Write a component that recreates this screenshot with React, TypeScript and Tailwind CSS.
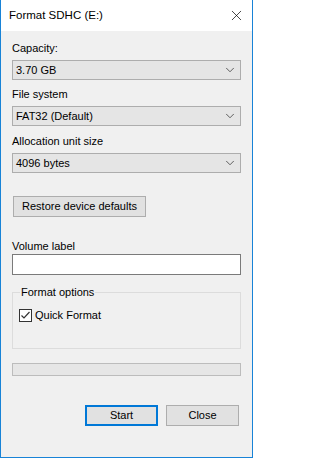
import { X, ChevronDown } from "lucide-react";

const font = "font-['Segoe_UI','Liberation_Sans',Arial,sans-serif]";

const Combo = ({ value, className = "" }: { value: string; className?: string }) => (
  <div
    className={`flex h-[20px] items-center justify-between border border-[#adadad] bg-[#e5e5e5] pl-[3px] pr-[3px] text-[11px] leading-[15px] text-black ${className}`}
  >
    <span>{value}</span>
    <ChevronDown size={14} strokeWidth={1.3} className="text-[#333]" />
  </div>
);

const Label = ({ text, className = "" }: { text: string; className?: string }) => (
  <div className={`h-[15px] text-[11px] leading-[15px] text-black ${className}`}>{text}</div>
);

const App = () => {
  return (
    <div className={`flex h-[458px] w-[253px] flex-col border-x border-b border-[#1883d7] bg-white ${font}`}>
      <div className="flex h-[31px] items-center justify-between pl-[8px] pr-[7px]">
        <span className="text-[11.5px] text-black">Format SDHC (E:)</span>
        <X size={17} strokeWidth={1} className="text-black" />
      </div>

      <div className="flex flex-1 flex-col bg-[#f0f0f0] px-[11px] pt-[10px]">
        <Label text="Capacity:" />
        <Combo value="3.70 GB" className="mt-[4px]" />

        <Label text="File system" className="mt-[7px]" />
        <Combo value="FAT32 (Default)" className="mt-[4px]" />

        <Label text="Allocation unit size" className="mt-[8px]" />
        <Combo value="4096 bytes" className="mt-[4px]" />

        <button className="ml-[1px] mt-[23px] h-[21px] w-[133px] border border-[#adadad] bg-[#e1e1e1] text-[11px] text-black">
          Restore device defaults
        </button>

        <Label text="Volume label" className="mt-[22px]" />
        <input
          type="text"
          className="mt-0 h-[21px] w-full border border-[#7a7a7a] bg-white px-[3px] text-[11px] outline-none"
        />

        <div className="relative mt-[17px] h-[57px] border border-[#dcdcdc]">
          <span className="absolute left-[7px] top-[-8px] bg-[#f0f0f0] px-[1px] text-[11px] leading-[15px] text-black">
            Format options
          </span>
          <label className="ml-[6px] mt-[16px] flex items-center gap-[3px] text-[11px] leading-[13px] text-black">
            <span className="flex h-[13px] w-[13px] items-center justify-center border border-[#333] bg-white">
              <svg width="11" height="11" viewBox="0 0 11 11">
                <path d="M1.5 5.5 L4 8 L9.5 2" fill="none" stroke="#333" strokeWidth="1.2" />
              </svg>
            </span>
            Quick Format
          </label>
        </div>

        <div className="mt-[14px] h-[13px] w-full border border-[#bcbcbc] bg-[#e6e6e6]" />

        <div className="mr-[2px] mt-[29px] flex justify-end gap-[8px]">
          <button className="h-[21px] w-[73px] border-2 border-[#0078d7] bg-[#e1e1e1] text-[11px] text-black">
            Start
          </button>
          <button className="h-[21px] w-[73px] border border-[#adadad] bg-[#e1e1e1] text-[11px] text-black">
            Close
          </button>
        </div>
      </div>
    </div>
  );
};

export default App;
